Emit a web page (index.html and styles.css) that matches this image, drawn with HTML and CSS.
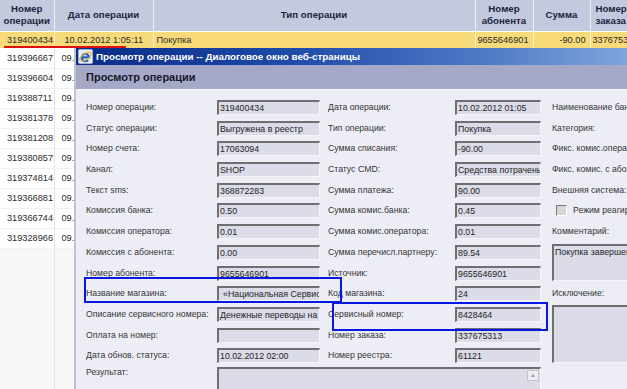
FILE: index.html
```html
<!DOCTYPE html>
<html lang="ru">
<head>
<meta charset="utf-8">
<title>Просмотр операции</title>
<link rel="stylesheet" href="styles.css">
</head>
<body>
<div class="page">
  <table class="grid">
    <colgroup>
      <col class="c1"><col class="c2"><col class="c3"><col class="c4"><col class="c5"><col class="c6">
    </colgroup>
    <thead>
      <tr class="head">
        <th>Номер<br>операции</th>
        <th>Дата операции</th>
        <th>Тип операции</th>
        <th>Номер<br>абонента</th>
        <th>Сумма</th>
        <th class="lft">Номер<br>заказа</th>
      </tr>
    </thead>
    <tbody>
      <tr class="sel">
        <td>319400434</td>
        <td>10.02.2012 1:05:11</td>
        <td class="type">Покупка</td>
        <td class="num">9655646901</td>
        <td class="num">-90.00</td>
        <td class="short">337675313</td>
      </tr>
      <tr><td>319396667</td><td>09.02.2012 23:51:02</td><td></td><td></td><td></td><td></td></tr>
      <tr><td>319396604</td><td>09.02.2012 23:50:12</td><td></td><td></td><td></td><td></td></tr>
      <tr><td>319388711</td><td>09.02.2012 23:31:40</td><td></td><td></td><td></td><td></td></tr>
      <tr><td>319381378</td><td>09.02.2012 23:14:05</td><td></td><td></td><td></td><td></td></tr>
      <tr><td>319381208</td><td>09.02.2012 23:13:41</td><td></td><td></td><td></td><td></td></tr>
      <tr><td>319380857</td><td>09.02.2012 23:12:50</td><td></td><td></td><td></td><td></td></tr>
      <tr><td>319374814</td><td>09.02.2012 22:58:33</td><td></td><td></td><td></td><td></td></tr>
      <tr><td>319366881</td><td>09.02.2012 22:40:19</td><td></td><td></td><td></td><td></td></tr>
      <tr><td>319366744</td><td>09.02.2012 22:39:58</td><td></td><td></td><td></td><td></td></tr>
      <tr><td>319328966</td><td>09.02.2012 21:20:07</td><td></td><td></td><td></td><td></td></tr>
      <tr class="filler"><td></td><td></td><td></td><td></td><td></td><td></td></tr>
    </tbody>
  </table>

  <div class="underline"></div>

  <div class="dialog">
    <div class="titlebar">
      <svg class="ie" width="15" height="15" viewBox="0 0 16 16">
        <rect x="0.5" y="0.5" width="15" height="15" rx="1.5" fill="#e9eff9" stroke="#9fb4d8"/>
        <path d="M4.3 9 H11.8 A3.9 3.9 0 1 0 10.8 11.8" fill="none" stroke="#1b67c9" stroke-width="2.3"/>
        <ellipse cx="8" cy="8.2" rx="7" ry="3.2" transform="rotate(-32 8 8.2)" fill="none" stroke="#f2b11e" stroke-width="1.3"/>
      </svg>
      <span class="title">Просмотр операции -- Диалоговое окно веб-страницы</span>
    </div>
    <div class="panel">Просмотр операции</div>
    <div class="form">
      <span class="lbl">Номер операции:</span><span class="f f1">319400434</span>
      <span class="lbl">Дата операции:</span><span class="f f2">10.02.2012 01:05</span>
      <span class="lbl">Наименование банка:</span>

      <span class="lbl">Статус операции:</span><span class="f f1">Выгружена в реестр</span>
      <span class="lbl">Тип операции:</span><span class="f f2">Покупка</span>
      <span class="lbl">Категория:</span>

      <span class="lbl">Номер счета:</span><span class="f f1">17063094</span>
      <span class="lbl">Сумма списания:</span><span class="f f2">-90.00</span>
      <span class="lbl">Фикс. комис.оператора:</span>

      <span class="lbl">Канал:</span><span class="f f1">SHOP</span>
      <span class="lbl">Статус CMD:</span><span class="f f2">Средства потрачены</span>
      <span class="lbl">Фикс. комис. с абонента:</span>

      <span class="lbl">Текст sms:</span><span class="f f1">368872283</span>
      <span class="lbl">Сумма платежа:</span><span class="f f2">90.00</span>
      <span class="lbl">Внешняя система:</span>

      <span class="lbl">Комиссия банка:</span><span class="f f1">0.50</span>
      <span class="lbl">Сумма комис.банка:</span><span class="f f2">0.45</span>
      <span class="lbl chk"><span class="box"></span>Режим реагирования</span>

      <span class="lbl">Комиссия оператора:</span><span class="f f1">0.01</span>
      <span class="lbl">Сумма комис.оператора:</span><span class="f f2">0.01</span>
      <span class="lbl">Комментарий:</span>

      <span class="lbl">Комиссия с абонента:</span><span class="f f1">0.00</span>
      <span class="lbl">Сумма перечисл.партнеру:</span><span class="f f2">89.54</span>
      <span class="ta comment">Покупка завершена</span>

      <span class="lbl">Номер абонента:</span><span class="f f1">9655646901</span>
      <span class="lbl">Источник:</span><span class="f f2">9655646901</span>

      <span class="lbl">Название магазина:</span><span class="f f1 pad">«Национальная Сервисная Компания»</span>
      <span class="lbl">Код магазина:</span><span class="f f2">24</span>
      <span class="lbl">Исключение:</span>

      <span class="lbl">Описание сервисного номера:</span><span class="f f1">Денежные переводы на карту</span>
      <span class="lbl">Сервисный номер:</span><span class="f f2">8428464</span>
      <span class="ta except"></span>

      <span class="lbl">Оплата на номер:</span><span class="f f1"></span>
      <span class="lbl">Номер заказа:</span><span class="f f2">337675313</span>

      <span class="lbl">Дата обнов. статуса:</span><span class="f f1">10.02.2012 02:00</span>
      <span class="lbl">Номер реестра:</span><span class="f f2">61121</span>

      <span class="lbl result-lbl">Результат:</span>
      <span class="ta result"><span class="scroll">&#9650;</span></span>
    </div>
  </div>

  <div class="mark mark1"></div>
  <div class="mark mark2"></div>
</div>
</body>
</html>
```

FILE: styles.css
```css
* { box-sizing: border-box; }

body {
  margin: 0;
  width: 627px;
  height: 389px;
  overflow: hidden;
  font-family: "Liberation Sans", Arial, sans-serif;
  background: #f6f6f9;
}

.page {
  position: relative;
  width: 627px;
  height: 389px;
  overflow: hidden;
}

/* ---------- background grid ---------- */
.grid {
  border-collapse: collapse;
  table-layout: fixed;
  width: 630px;
}
.c1 { width: 54px; }
.c2 { width: 99px; }
.c3 { width: 322px; }
.c4 { width: 58px; }
.c5 { width: 57px; }
.c6 { width: 40px; }

.head th {
  height: 31px;
  padding: 0;
  background: #c4cade;
  color: #1d2540;
  font-size: 9.7px;
  line-height: 12px;
  font-weight: bold;
  text-align: center;
  white-space: nowrap;
  overflow: hidden;
  border-right: 1px solid #eef0f7;
  border-bottom: 1px solid #ffffff;
}
.head th.lft { text-align: left; padding-left: 5px; }

.grid td {
  height: 20px;
  padding: 0 0 0 7px;
  font-size: 9.2px;
  color: #2c2c2c;
  white-space: nowrap;
  overflow: hidden;
  background: #ffffff;
  border-right: 1px solid #e3e3ea;
  border-bottom: 1px solid #f1f1f4;
}

.grid .sel td {
  height: 17px;
  background: #f8da79;
  border-right: 1px solid #fbf1cf;
  border-bottom: 1px solid #ffffff;
  color: #2a2a2a;
}
.grid .sel td:nth-child(2) { padding-left: 10px; }
.grid .sel td.type { padding-left: 3px; }
.grid .sel td.num { text-align: right; padding: 0 4px 0 0; }
.grid .sel td.short { padding-left: 2px; text-overflow: clip; }

.grid .filler td {
  height: 160px;
  background: #f7f7fa;
  border-bottom: none;
}

.underline {
  position: absolute;
  left: 4px;
  top: 46px;
  width: 122px;
  height: 2px;
  background: #e01010;
}

/* ---------- dialog ---------- */
.dialog {
  position: absolute;
  left: 74px;
  top: 48px;
  right: -40px;
  bottom: -20px;
  background: #ededf5;
  border-left: 2px solid #c3c3cc;
}

.titlebar {
  height: 17px;
  display: flex;
  align-items: center;
  gap: 3px;
  padding-left: 2px;
  background: linear-gradient(90deg, #0b2b86 0%, #1d49a8 35%, #4f7cc6 70%, #8fb0e2 100%);
}
.ie { flex: none; }
.title {
  color: #ffffff;
  font-size: 9.8px;
  font-weight: bold;
  white-space: nowrap;
}

.panel {
  height: 25px;
  line-height: 25px;
  padding-left: 10px;
  background: #a6a8c7;
  color: #15172a;
  font-size: 11px;
  font-weight: bold;
  border-bottom: 1px solid #f5f5fb;
}

.form {
  display: grid;
  grid-template-columns: 131px 111px 127px 97px 200px;
  grid-auto-rows: 15px;
  row-gap: 5.7px;
  padding: 10px 0 0 10px;
}

.lbl {
  font-size: 8.7px;
  line-height: 15px;
  color: #353535;
  white-space: nowrap;
  overflow: hidden;
}

.f {
  height: 15px;
  background: #dcdce9;
  border-top: 2px solid #6f6f72;
  border-left: 2px solid #6f6f72;
  border-right: 1px solid #f4f4f9;
  border-bottom: 1px solid #f4f4f9;
  font-size: 8.8px;
  line-height: 12px;
  padding-left: 1px;
  color: #242424;
  white-space: nowrap;
  overflow: hidden;
}
.f1 { width: 103px; }
.f2 { width: 86px; }
.f.pad { padding-left: 4px; }

.chk {
  display: flex;
  align-items: center;
  gap: 6px;
  padding-left: 4px;
}
.box {
  width: 11px;
  height: 11px;
  flex: none;
  background: #d6d6d6;
  border-top: 1px solid #7a7a7a;
  border-left: 1px solid #7a7a7a;
  border-right: 1px solid #ffffff;
  border-bottom: 1px solid #ffffff;
}

.ta {
  background: #dcdce9;
  border-top: 2px solid #6f6f72;
  border-left: 2px solid #6f6f72;
  border-right: 1px solid #f4f4f9;
  border-bottom: 1px solid #f4f4f9;
  font-size: 8.8px;
  line-height: 12px;
  padding-left: 1px;
  color: #242424;
  white-space: nowrap;
  overflow: hidden;
}
.comment {
  grid-column: 5;
  grid-row: 8 / span 2;
  margin-top: -1px;
}
.except {
  grid-column: 5;
  grid-row: 11 / span 3;
  margin-top: -2px;
}
.result-lbl {
  grid-column: 1;
  grid-row: 14;
  margin-top: -4px;
}
.result {
  grid-column: 2 / span 3;
  grid-row: 14 / span 2;
  width: 324px;
  margin-top: -2px;
  position: relative;
}
.scroll {
  position: absolute;
  right: 1px;
  top: 1px;
  width: 12px;
  height: 11px;
  background: #ececf2;
  border: 1px solid #c4c4cc;
  color: #a0a0a8;
  font-size: 6px;
  line-height: 9px;
  text-align: center;
}

/* ---------- annotation boxes ---------- */
.mark {
  position: absolute;
  border: 2px solid #0a16e2;
}
.mark1 { left: 84px; top: 277px; width: 258px; height: 26px; }
.mark2 { left: 332px; top: 302px; width: 216px; height: 29px; }
```
